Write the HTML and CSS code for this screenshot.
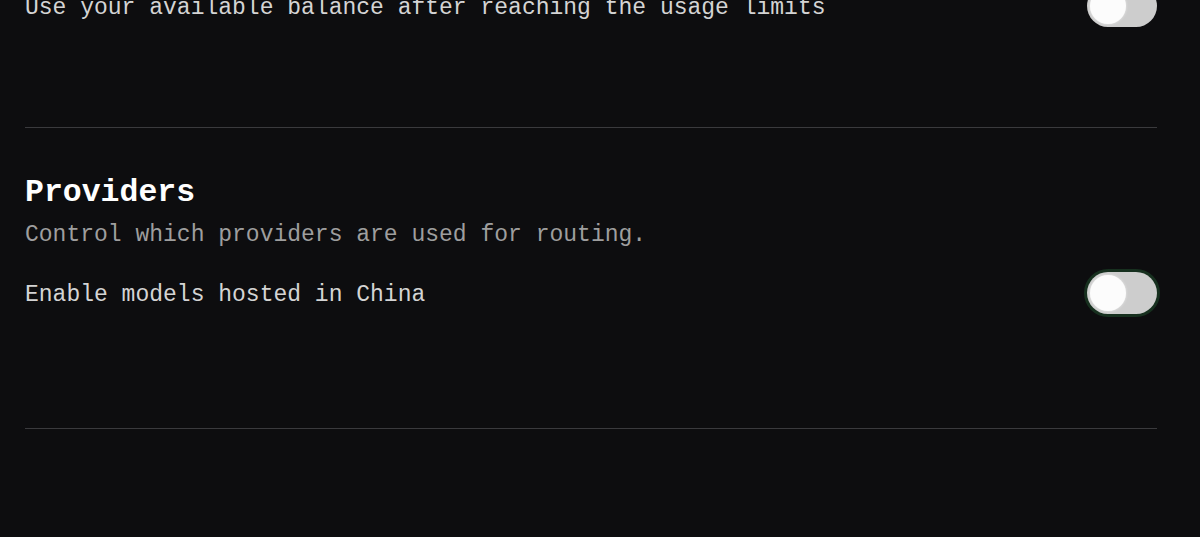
FILE: index.html
```html
<!DOCTYPE html>
<html lang="en">
<head>
<meta charset="utf-8">
<title>Settings</title>
<link rel="stylesheet" href="styles.css">
</head>
<body>
<main class="settings">
  <section class="section section-first">
    <div class="row">
      <span class="row-label">Use your available balance after reaching the usage limits</span>
      <span class="toggle"><span class="knob"></span></span>
    </div>
  </section>
  <section class="section section-providers">
    <h2 class="section-title">Providers</h2>
    <p class="section-desc">Control which providers are used for routing.</p>
    <div class="row row-spaced">
      <span class="row-label">Enable models hosted in China</span>
      <span class="toggle toggle-focus"><span class="knob"></span></span>
    </div>
  </section>
</main>
</body>
</html>
```
FILE: styles.css
```css
* { box-sizing: border-box; }
html, body { margin: 0; padding: 0; }
body {
  background: #0d0d0f;
  font-family: "Liberation Mono", "DejaVu Sans Mono", monospace;
  color: #d2d2d2;
  height: 537px;
  overflow: hidden;
}
.settings {
  padding: 0 43px 0 25px;
  margin-top: -15px;
}
.section {
  border-bottom: 1px solid #3a3a3d;
}
.section-first {
  padding-bottom: 100px;
}
.section-providers {
  padding-top: 45px;
  padding-bottom: 114px;
}
.row {
  display: flex;
  align-items: center;
  justify-content: space-between;
  height: 42px;
}
.row-spaced { margin-top: 21px; }
.row-label {
  font-size: 23px;
  line-height: 32px;
  padding-top: 4px;
  color: #d4d4d4;
}
.section-title {
  margin: 0;
  font-size: 31.5px;
  line-height: 40px;
  font-weight: 700;
  color: #ffffff;
}
.section-desc {
  margin: 6px 0 0;
  font-size: 23px;
  line-height: 32px;
  color: #9e9e9e;
}
.toggle {
  position: relative;
  display: inline-flex;
  align-items: center;
  width: 70px;
  height: 42px;
  border-radius: 21px;
  background: #cdcdcd;
  padding: 0 3px;
  flex: none;
}
.toggle-focus {
  box-shadow: 0 0 0 3px #17301f;
}
.knob {
  width: 36px;
  height: 36px;
  border-radius: 50%;
  background: #fcfcfc;
  box-shadow: 0 0 3px rgba(255,255,255,0.6);
}
```
